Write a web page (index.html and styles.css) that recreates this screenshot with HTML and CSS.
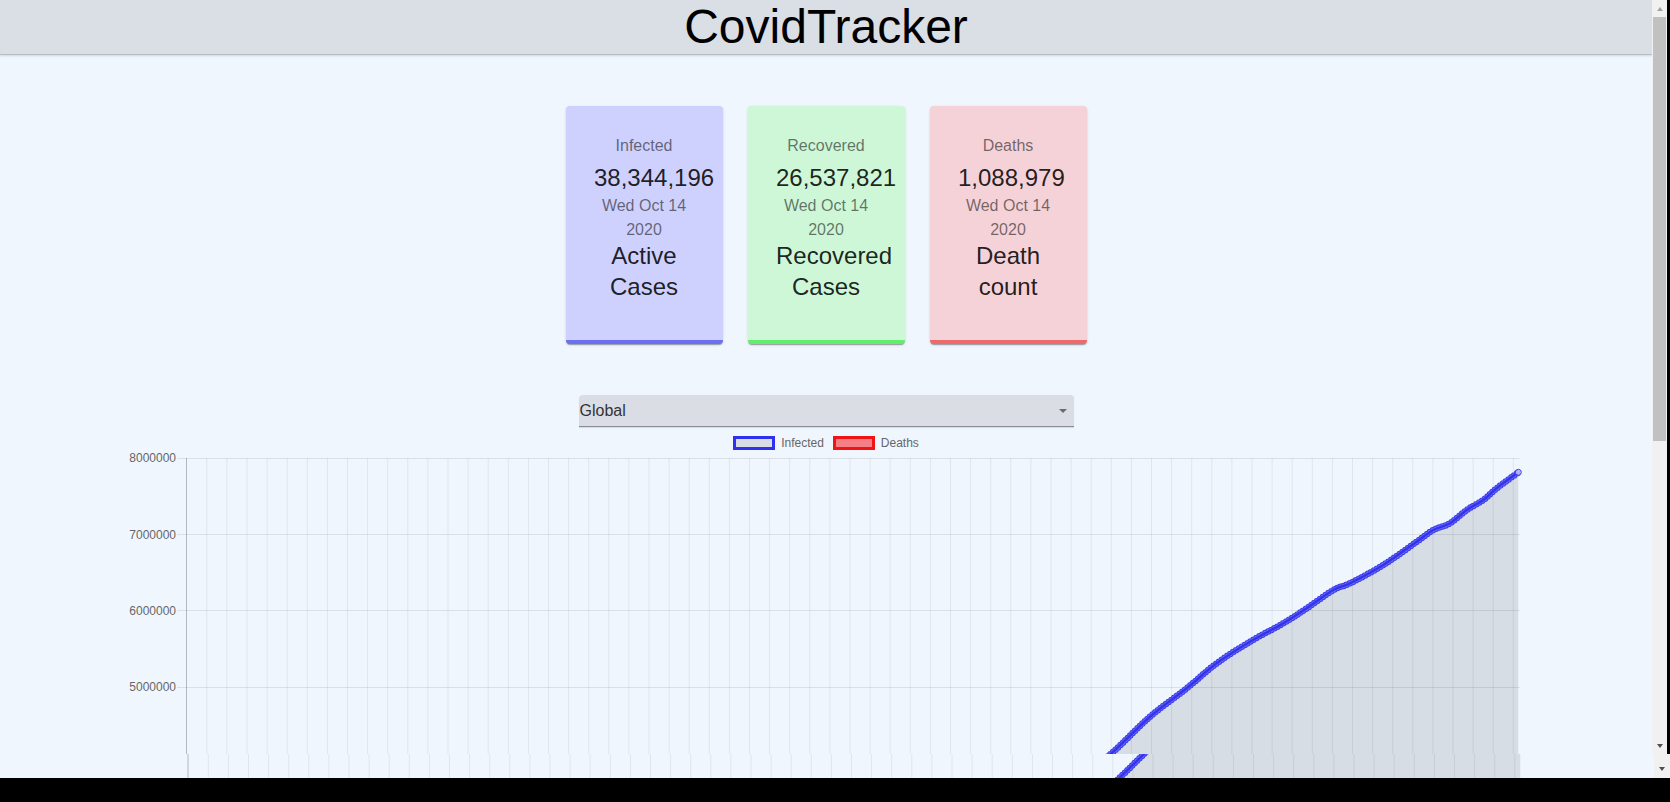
FILE: index.html
```html
<!DOCTYPE html>
<html lang="en">
<head>
<meta charset="utf-8">
<title>CovidTracker</title>
<link rel="stylesheet" href="styles.css">
</head>
<body>
<div class="screen">
  <div class="window">
    <div class="viewport">
      <header class="app-bar"><h1 class="title">CovidTracker</h1></header>

      <section class="cards">
        <div class="card card-infected">
          <p class="card-label">Infected</p>
          <p class="card-value">38,344,196</p>
          <p class="card-date">Wed Oct 14 2020</p>
          <p class="card-desc">Active Cases</p>
        </div>
        <div class="card card-recovered">
          <p class="card-label">Recovered</p>
          <p class="card-value">26,537,821</p>
          <p class="card-date">Wed Oct 14 2020</p>
          <p class="card-desc">Recovered Cases</p>
        </div>
        <div class="card card-deaths">
          <p class="card-label">Deaths</p>
          <p class="card-value">1,088,979</p>
          <p class="card-date">Wed Oct 14 2020</p>
          <p class="card-desc">Death count</p>
        </div>
      </section>

      <div class="picker">
        <div class="select"><span class="select-value">Global</span><span class="caret"></span></div>
      </div>

      <div class="legend">
        <div class="legend-item"><span class="legend-box legend-infected"></span><span class="legend-text">Infected</span></div>
        <div class="legend-item"><span class="legend-box legend-deaths"></span><span class="legend-text">Deaths</span></div>
      </div>

      <svg class="chart" width="1652" height="680" viewBox="0 0 1652 680">
        <defs>
          <clipPath id="clip-main"><rect x="0" y="0" width="1652" height="304"></rect></clipPath>
          <clipPath id="clip-strip"><rect x="0" y="304" width="1652" height="24"></rect></clipPath>
          <g id="vgrid">
            <line class="vgrid" x1="206.3" y1="318" x2="1520" y2="318"></line>
            <line class="axis" x1="186.5" y1="8" x2="186.5" y2="628"></line>
          </g>
          <g id="series">
            <path class="area" d="M186.7 618.4 L300 618.3 L400 612.3 L500 607 L600 587.9 L700 549.7 L800 504 L900 450.5 L1000 393.3 L1050 351.4 C1063.33 340.6 1069.45 336.78 1080 328.5 C1090.55 320.22 1101.63 312 1113.3 301.7 C1124.97 291.4 1137.77 277.27 1150 266.7 C1162.23 256.13 1175.58 247.2 1186.7 238.3 C1197.82 229.4 1206.15 221.07 1216.7 213.3 C1227.25 205.53 1238.9 198.37 1250 191.7 C1261.1 185.03 1273.85 178.87 1283.3 173.3 C1292.75 167.73 1298.37 163.85 1306.7 158.3 C1315.03 152.75 1326.08 144.17 1333.3 140 C1340.52 135.83 1341.67 137.47 1350 133.3 C1358.33 129.13 1372.18 121.93 1383.3 115 C1394.42 108.07 1408.37 97.53 1416.7 91.7 C1425.03 85.87 1427.75 83.07 1433.3 80 C1438.85 76.93 1444.43 76.63 1450 73.3 C1455.57 69.97 1461.15 63.88 1466.7 60 C1472.25 56.12 1478.3 53.62 1483.3 50 C1488.3 46.38 1490.87 42.92 1496.7 38.3 C1502.53 33.68 1514.7 24.97 1518.3 22.3 L1518.3 618.4 Z"></path>
            <path class="dots-outer" d="M186.7 618.4 L300 618.3 L400 612.3 L500 607 L600 587.9 L700 549.7 L800 504 L900 450.5 L1000 393.3 L1050 351.4 C1063.33 340.6 1069.45 336.78 1080 328.5 C1090.55 320.22 1101.63 312 1113.3 301.7 C1124.97 291.4 1137.77 277.27 1150 266.7 C1162.23 256.13 1175.58 247.2 1186.7 238.3 C1197.82 229.4 1206.15 221.07 1216.7 213.3 C1227.25 205.53 1238.9 198.37 1250 191.7 C1261.1 185.03 1273.85 178.87 1283.3 173.3 C1292.75 167.73 1298.37 163.85 1306.7 158.3 C1315.03 152.75 1326.08 144.17 1333.3 140 C1340.52 135.83 1341.67 137.47 1350 133.3 C1358.33 129.13 1372.18 121.93 1383.3 115 C1394.42 108.07 1408.37 97.53 1416.7 91.7 C1425.03 85.87 1427.75 83.07 1433.3 80 C1438.85 76.93 1444.43 76.63 1450 73.3 C1455.57 69.97 1461.15 63.88 1466.7 60 C1472.25 56.12 1478.3 53.62 1483.3 50 C1488.3 46.38 1490.87 42.92 1496.7 38.3 C1502.53 33.68 1514.7 24.97 1518.3 22.3"></path>
            <path class="dots-inner" d="M186.7 618.4 L300 618.3 L400 612.3 L500 607 L600 587.9 L700 549.7 L800 504 L900 450.5 L1000 393.3 L1050 351.4 C1063.33 340.6 1069.45 336.78 1080 328.5 C1090.55 320.22 1101.63 312 1113.3 301.7 C1124.97 291.4 1137.77 277.27 1150 266.7 C1162.23 256.13 1175.58 247.2 1186.7 238.3 C1197.82 229.4 1206.15 221.07 1216.7 213.3 C1227.25 205.53 1238.9 198.37 1250 191.7 C1261.1 185.03 1273.85 178.87 1283.3 173.3 C1292.75 167.73 1298.37 163.85 1306.7 158.3 C1315.03 152.75 1326.08 144.17 1333.3 140 C1340.52 135.83 1341.67 137.47 1350 133.3 C1358.33 129.13 1372.18 121.93 1383.3 115 C1394.42 108.07 1408.37 97.53 1416.7 91.7 C1425.03 85.87 1427.75 83.07 1433.3 80 C1438.85 76.93 1444.43 76.63 1450 73.3 C1455.57 69.97 1461.15 63.88 1466.7 60 C1472.25 56.12 1478.3 53.62 1483.3 50 C1488.3 46.38 1490.87 42.92 1496.7 38.3 C1502.53 33.68 1514.7 24.97 1518.3 22.3"></path>
            <path class="line" d="M186.7 618.4 L300 618.3 L400 612.3 L500 607 L600 587.9 L700 549.7 L800 504 L900 450.5 L1000 393.3 L1050 351.4 C1063.33 340.6 1069.45 336.78 1080 328.5 C1090.55 320.22 1101.63 312 1113.3 301.7 C1124.97 291.4 1137.77 277.27 1150 266.7 C1162.23 256.13 1175.58 247.2 1186.7 238.3 C1197.82 229.4 1206.15 221.07 1216.7 213.3 C1227.25 205.53 1238.9 198.37 1250 191.7 C1261.1 185.03 1273.85 178.87 1283.3 173.3 C1292.75 167.73 1298.37 163.85 1306.7 158.3 C1315.03 152.75 1326.08 144.17 1333.3 140 C1340.52 135.83 1341.67 137.47 1350 133.3 C1358.33 129.13 1372.18 121.93 1383.3 115 C1394.42 108.07 1408.37 97.53 1416.7 91.7 C1425.03 85.87 1427.75 83.07 1433.3 80 C1438.85 76.93 1444.43 76.63 1450 73.3 C1455.57 69.97 1461.15 63.88 1466.7 60 C1472.25 56.12 1478.3 53.62 1483.3 50 C1488.3 46.38 1490.87 42.92 1496.7 38.3 C1502.53 33.68 1514.7 24.97 1518.3 22.3"></path>
            <circle class="last-point" cx="1518.3" cy="22.3" r="3"></circle>
          </g>
        </defs>

        <g clip-path="url(#clip-main)">
          <use href="#vgrid"></use>
          <line class="hgrid" x1="177" y1="8.5" x2="1519.5" y2="8.5"></line>
          <line class="hgrid" x1="177" y1="84.5" x2="1519.5" y2="84.5"></line>
          <line class="hgrid" x1="177" y1="160.5" x2="1519.5" y2="160.5"></line>
          <line class="hgrid" x1="177" y1="237.5" x2="1519.5" y2="237.5"></line>
          <line class="hgrid" x1="177" y1="313.5" x2="1519.5" y2="313.5"></line>
          <text class="ytick" x="176" y="12.3">8000000</text>
          <text class="ytick" x="176" y="88.6">7000000</text>
          <text class="ytick" x="176" y="164.9">6000000</text>
          <text class="ytick" x="176" y="241.2">5000000</text>
          <text class="ytick" x="176" y="317.5">4000000</text>
          <use href="#series"></use>
        </g>
        <g clip-path="url(#clip-strip)">
          <use href="#vgrid" transform="translate(1.5 0)"></use>
          <use href="#series" transform="translate(2 30)"></use>
        </g>
      </svg>
    </div>

    <div class="side">
      <div class="side-upper">
        <div class="scrollbar">
          <div class="sb-btn"><span class="arrow-up"></span></div>
          <div class="sb-thumb"></div>
          <div class="sb-track"></div>
          <div class="sb-btn"><span class="arrow-down"></span></div>
        </div>
        <div class="edge"></div>
      </div>
      <div class="side-lower">
        <div class="strip-track">
          <div class="sb-btn"><span class="arrow-down"></span></div>
        </div>
      </div>
    </div>
  </div>
  <div class="taskbar"></div>
</div>
</body>
</html>
```

FILE: styles.css
```css
html, body {
  margin: 0;
  padding: 0;
  background: #000;
  overflow: hidden;
}

.screen {
  width: 1670px;
  height: 802px;
  display: flex;
  flex-direction: column;
}

.window {
  height: 778px;
  display: flex;
}

.viewport {
  flex: 1;
  overflow: hidden;
  background: #f0f6fe;
  font-family: "Liberation Sans", Arial, sans-serif;
}

.taskbar {
  flex: 1;
  background: #000;
}

/* header */
.app-bar {
  height: 54px;
  background: #dadee5;
  box-shadow: 0 1px 0 #b7bbc2, 0 2px 2px rgba(0, 0, 0, 0.12);
}

.title {
  margin: 0;
  font-size: 48px;
  font-weight: 400;
  line-height: 54px;
  text-align: center;
  color: #000;
}

/* cards */
.cards {
  display: flex;
  justify-content: center;
  gap: 25px;
  margin-top: 52px;
}

.card {
  width: 157px;
  height: 238px;
  box-sizing: border-box;
  padding: 28px 28.5px 0;
  border-radius: 4px;
  border-bottom: 4px solid;
  text-align: center;
  box-shadow: 0 2px 1px -1px rgba(0, 0, 0, 0.2), 0 1px 1px 0 rgba(0, 0, 0, 0.14), 0 1px 3px 0 rgba(0, 0, 0, 0.12);
}

.card-infected {
  background: #ced1fd;
  border-bottom-color: #6b6ff4;
}

.card-recovered {
  background: #cdf7d7;
  border-bottom-color: #62ee6c;
}

.card-deaths {
  background: #f5d2d7;
  border-bottom-color: #ee6a6b;
}

.card p {
  margin: 0;
}

.card-label {
  font-size: 16px;
  line-height: 24px;
  margin-bottom: 4px !important;
  color: rgba(0, 0, 0, 0.54);
}

.card-value {
  font-size: 24px;
  line-height: 32px;
  color: rgba(0, 0, 0, 0.87);
}

.card-date {
  font-size: 16px;
  line-height: 24px;
  color: rgba(0, 0, 0, 0.54);
}

.card-desc {
  font-size: 24px;
  line-height: 31px;
  margin-top: -2px !important;
  color: rgba(0, 0, 0, 0.87);
}

/* country picker */
.picker {
  display: flex;
  justify-content: center;
  margin-top: 51px;
}

.select {
  width: 495px;
  height: 31px;
  display: flex;
  align-items: center;
  justify-content: space-between;
  background: #dadde4;
  border-radius: 4px 4px 0 0;
  border-bottom: 1px solid #8b8d92;
  box-shadow: 0 1px 1px rgba(0, 0, 0, 0.12);
}

.select-value {
  padding-left: 1px;
  font-size: 16px;
  line-height: 31px;
  color: #333;
}

.caret {
  width: 0;
  height: 0;
  margin-right: 7px;
  border-left: 4.5px solid transparent;
  border-right: 4.5px solid transparent;
  border-top: 4.5px solid #6b6b6b;
}

/* legend */
.legend {
  display: flex;
  justify-content: center;
  gap: 9px;
  height: 14px;
  margin-top: 9px;
}

.legend-item {
  display: flex;
  align-items: center;
  gap: 6px;
}

.legend-box {
  width: 36px;
  height: 8px;
  border: 3px solid;
}

.legend-infected {
  background: #d8dde5;
  border-color: #3030ef;
}

.legend-deaths {
  background: #f57f84;
  border-color: #f01414;
}

.legend-text {
  font-size: 12px;
  line-height: 14px;
  color: #666;
}

/* chart */
.chart {
  display: block;
}

.vgrid {
  stroke: rgba(0, 0, 0, 0.065);
  stroke-width: 620px;
  stroke-dasharray: 1 19.1;
}

.axis {
  stroke: rgba(0, 0, 0, 0.25);
  stroke-width: 1px;
}

.hgrid {
  stroke: rgba(0, 0, 0, 0.085);
  stroke-width: 1px;
}

.ytick {
  font-family: "Liberation Sans", Arial, sans-serif;
  font-size: 12px;
  fill: #666;
  text-anchor: end;
}

.area {
  fill: rgba(0, 0, 0, 0.1);
}

.line {
  fill: none;
  stroke: #3333ee;
  stroke-width: 2.5px;
  stroke-linejoin: round;
}

.dots-outer {
  fill: none;
  stroke: #3c3cee;
  stroke-width: 6.5px;
  stroke-linecap: round;
  stroke-dasharray: 0 3.4;
}

.dots-inner {
  fill: none;
  stroke: rgba(150, 155, 240, 0.55);
  stroke-width: 4.5px;
  stroke-linecap: round;
  stroke-dasharray: 0 3.4;
}

.last-point {
  fill: rgba(200, 205, 240, 0.8);
  stroke: #3a3aef;
  stroke-width: 1px;
}

/* scrollbar */
.side {
  width: 18px;
  display: flex;
  flex-direction: column;
}

.side-upper {
  height: 754px;
  display: flex;
}

.scrollbar {
  width: 15px;
  display: flex;
  flex-direction: column;
  background: #f1f1f1;
}

.edge {
  flex: 1;
  background: #000;
}

.sb-btn {
  height: 17px;
  display: flex;
  align-items: center;
  justify-content: center;
  flex-shrink: 0;
}

.sb-thumb {
  height: 424px;
  margin: 0 1px;
  background: #c1c1c1;
}

.sb-track {
  flex: 1;
}

.arrow-up {
  width: 0;
  height: 0;
  border-left: 3.5px solid transparent;
  border-right: 3.5px solid transparent;
  border-bottom: 4px solid #a3a3a3;
}

.arrow-down {
  width: 0;
  height: 0;
  border-left: 3.5px solid transparent;
  border-right: 3.5px solid transparent;
  border-top: 4px solid #505050;
}

.side-lower {
  height: 24px;
  display: flex;
  padding-left: 2px;
  background: #f0f6fe;
}

.strip-track {
  flex: 1;
  display: flex;
  flex-direction: column;
  justify-content: flex-end;
  padding-bottom: 1px;
  background: #f1f1f1;
}
```
